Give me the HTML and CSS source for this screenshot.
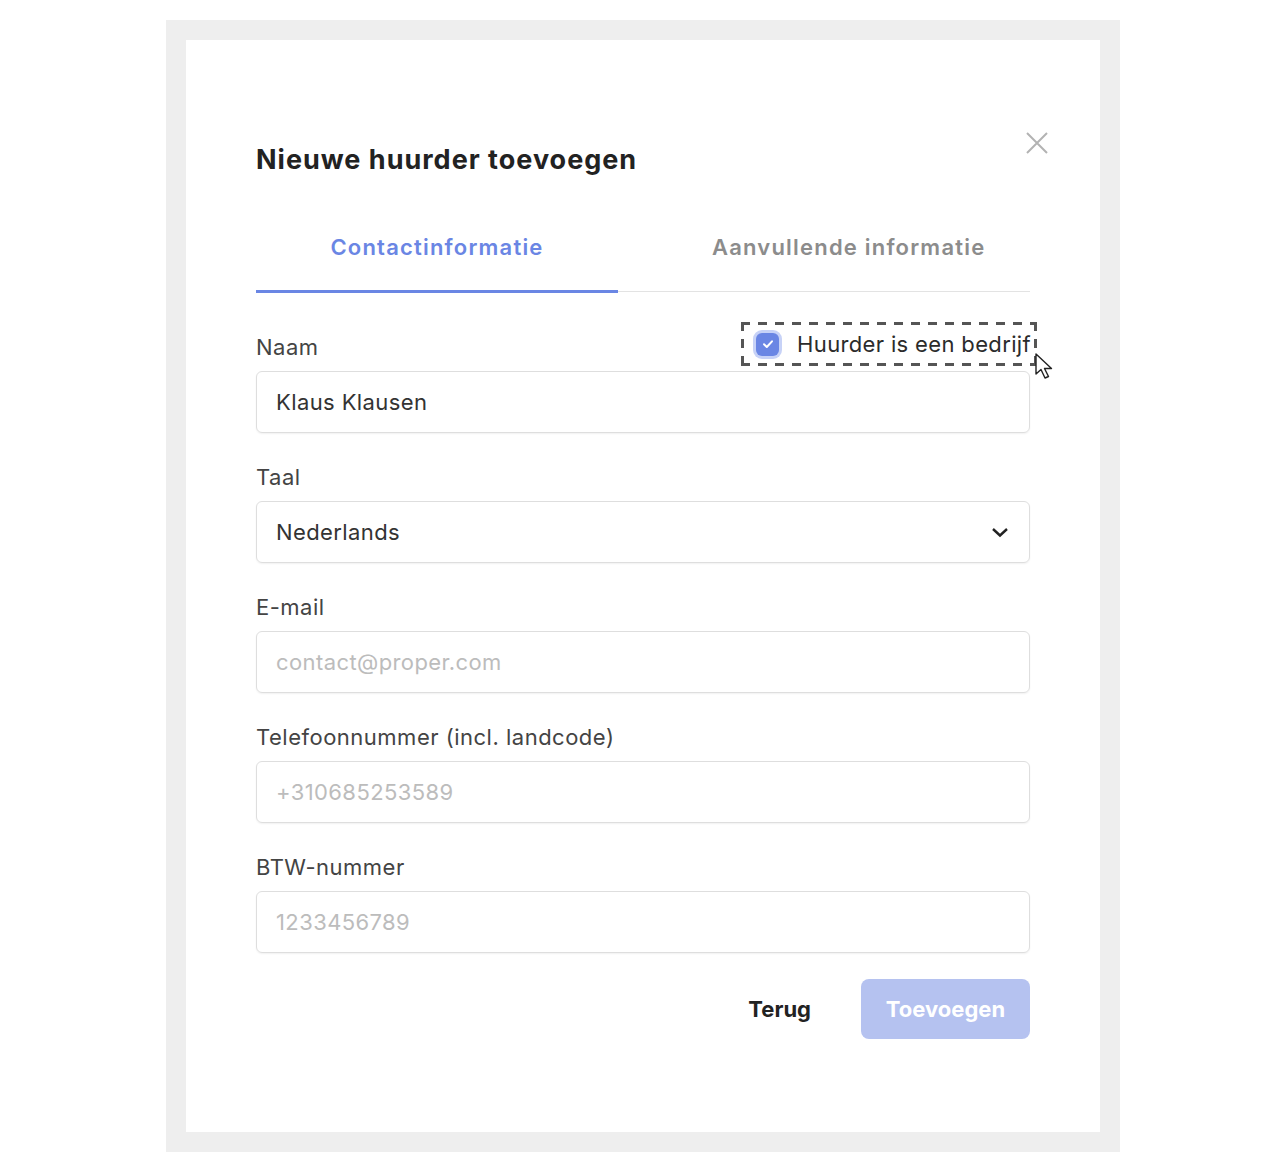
FILE: index.html
```html
<!DOCTYPE html>
<html lang="nl">
<head>
<meta charset="UTF-8">
<meta name="viewport" content="width=device-width, initial-scale=1.0">
<title>Nieuwe huurder toevoegen</title>
<link rel="stylesheet" href="styles.css">
</head>
<body>

<div class="frame">
    <section class="modal">
        <button class="close" aria-label="Sluiten">
            <svg width="22" height="22" viewBox="0 0 22 22"><path d="M1 1 L21 21 M21 1 L1 21" stroke="#b3b3b3" stroke-width="2" fill="none"/></svg>
        </button>

        <h2 class="title">Nieuwe huurder toevoegen</h2>

        <div class="tabs">
            <div class="tab active">Contactinformatie</div>
            <div class="tab">Aanvullende informatie</div>
        </div>

        <div class="field">
            <div class="label-row">
                <label class="label">Naam</label>
                <div class="company-check">
                    <span class="checkbox">
                        <svg width="14" height="14" viewBox="0 0 14 14"><path d="M3 7.3 L5.8 10 L11 4.3" stroke="#fff" stroke-width="2" fill="none" stroke-linecap="round" stroke-linejoin="round"/></svg>
                    </span>
                    <span>Huurder is een bedrijf</span>
                    <svg class="cursor" width="24" height="30" viewBox="0 0 24 30"><path d="M2 2 L2 22 L7 17.5 L11 26 L14.5 24.5 L10.5 16.5 L17.5 16.5 Z" fill="#fff" stroke="#222" stroke-width="1.4" stroke-linejoin="round"/></svg>
                </div>
            </div>
            <div class="input">Klaus Klausen</div>
        </div>

        <div class="field">
            <label class="label">Taal</label>
            <div class="input select">
                <span>Nederlands</span>
                <svg width="18" height="12" viewBox="0 0 18 12"><path d="M2 3 L9 9.5 L16 3" stroke="#222" stroke-width="2.4" fill="none"/></svg>
            </div>
        </div>

        <div class="field">
            <label class="label">E-mail</label>
            <div class="input placeholder">contact@proper.com</div>
        </div>

        <div class="field">
            <label class="label">Telefoonnummer (incl. landcode)</label>
            <div class="input placeholder">+310685253589</div>
        </div>

        <div class="field">
            <label class="label">BTW-nummer</label>
            <div class="input placeholder">1233456789</div>
        </div>

        <div class="actions">
            <button class="back-button">Terug</button>
            <button class="add-button">Toevoegen</button>
        </div>
    </section>
</div>

</body>
</html>
```

FILE: styles.css
```css
body {
    margin: 0;
    padding-top: 20px;
    font-family: Inter, "Noto Sans", sans-serif;
    background-color: #ffffff;
}

.frame {
    width: 914px;
    margin: 0 auto;
    border: 20px solid #eeeeee;
    position: relative;
    left: -1px;
}

.modal {
    position: relative;
    background-color: #ffffff;
    padding: 100px 70px 93px;
}

.close {
    position: absolute;
    top: 92px;
    right: 52px;
    padding: 0;
    border: none;
    background: none;
}

.title {
    margin: 0;
    font-size: 27px;
    line-height: 40px;
    font-weight: 700;
    color: #222222;
    letter-spacing: 1px;
}

.tabs {
    display: flex;
    margin-top: 36px;
    margin-bottom: 43px;
    border-bottom: 1px solid #e3e3e3;
}
.tab {
    font-size: 22px;
    font-weight: 600;
    letter-spacing: 1.2px;
    color: #8c8c8c;
    height: 74px;
    line-height: 62px;
}
.tab.active {
    width: 362px;
    text-align: center;
    color: #6a86e4;
    border-bottom: 3px solid #6a86e4;
    margin-bottom: -2px;
}
.tab + .tab {
    padding-left: 94px;
}

.field {
    margin-bottom: 32px;
}
.label-row {
    display: flex;
    justify-content: space-between;
    align-items: center;
    height: 24px;
    margin-bottom: 12px;
}
.label {
    display: block;
    font-size: 22px;
    letter-spacing: 0.5px;
    line-height: 24px;
    color: #444444;
    margin-bottom: 12px;
}
.label-row .label {
    margin-bottom: 0;
}
.company-check {
    position: relative;
    display: flex;
    align-items: center;
    gap: 18px;
    box-sizing: border-box;
    height: 44px;
    margin-right: -7px;
    margin-top: -6px;
    padding: 0 6px 0 15px;
    background:
        repeating-linear-gradient(90deg, #555555 0 9px, transparent 9px 17px) left top / 100% 3px no-repeat,
        repeating-linear-gradient(90deg, #555555 0 9px, transparent 9px 17px) left bottom / 100% 3px no-repeat,
        repeating-linear-gradient(180deg, #555555 0 9px, transparent 9px 17px) left top / 3px 100% no-repeat,
        repeating-linear-gradient(180deg, #555555 0 9px, transparent 9px 17px) right top / 3px 100% no-repeat;
    font-size: 22px;
    letter-spacing: 0.35px;
    color: #2b2b2b;
}
.checkbox {
    display: flex;
    align-items: center;
    justify-content: center;
    width: 23px;
    height: 23px;
    border-radius: 6px;
    background-color: #6a86e4;
    box-shadow: 0 0 0 3px #c7d2f7;
}
.cursor {
    position: absolute;
    right: -21px;
    top: 30px;
}

.input {
    display: flex;
    align-items: center;
    height: 60px;
    padding: 0 19px;
    border: 1px solid #dedede;
    border-radius: 6px;
    box-shadow: 0 1px 2px rgba(0, 0, 0, 0.06);
    font-size: 22px;
    letter-spacing: 0.4px;
    color: #333333;
}
.select {
    justify-content: space-between;
    padding-right: 20px;
}
.placeholder {
    color: #bcbcbc;
}

.actions {
    display: flex;
    justify-content: flex-end;
    align-items: center;
    gap: 50px;
    margin-top: -6px;
}
.back-button, .add-button {
    font-family: inherit;
    font-size: 22px;
    font-weight: 700;
    border: none;
    cursor: pointer;
}
.back-button {
    background: none;
    color: #222222;
    padding: 0;
}
.add-button {
    width: 169px;
    height: 60px;
    border-radius: 8px;
    background-color: #b5c2f0;
    color: #ffffff;
}
```
